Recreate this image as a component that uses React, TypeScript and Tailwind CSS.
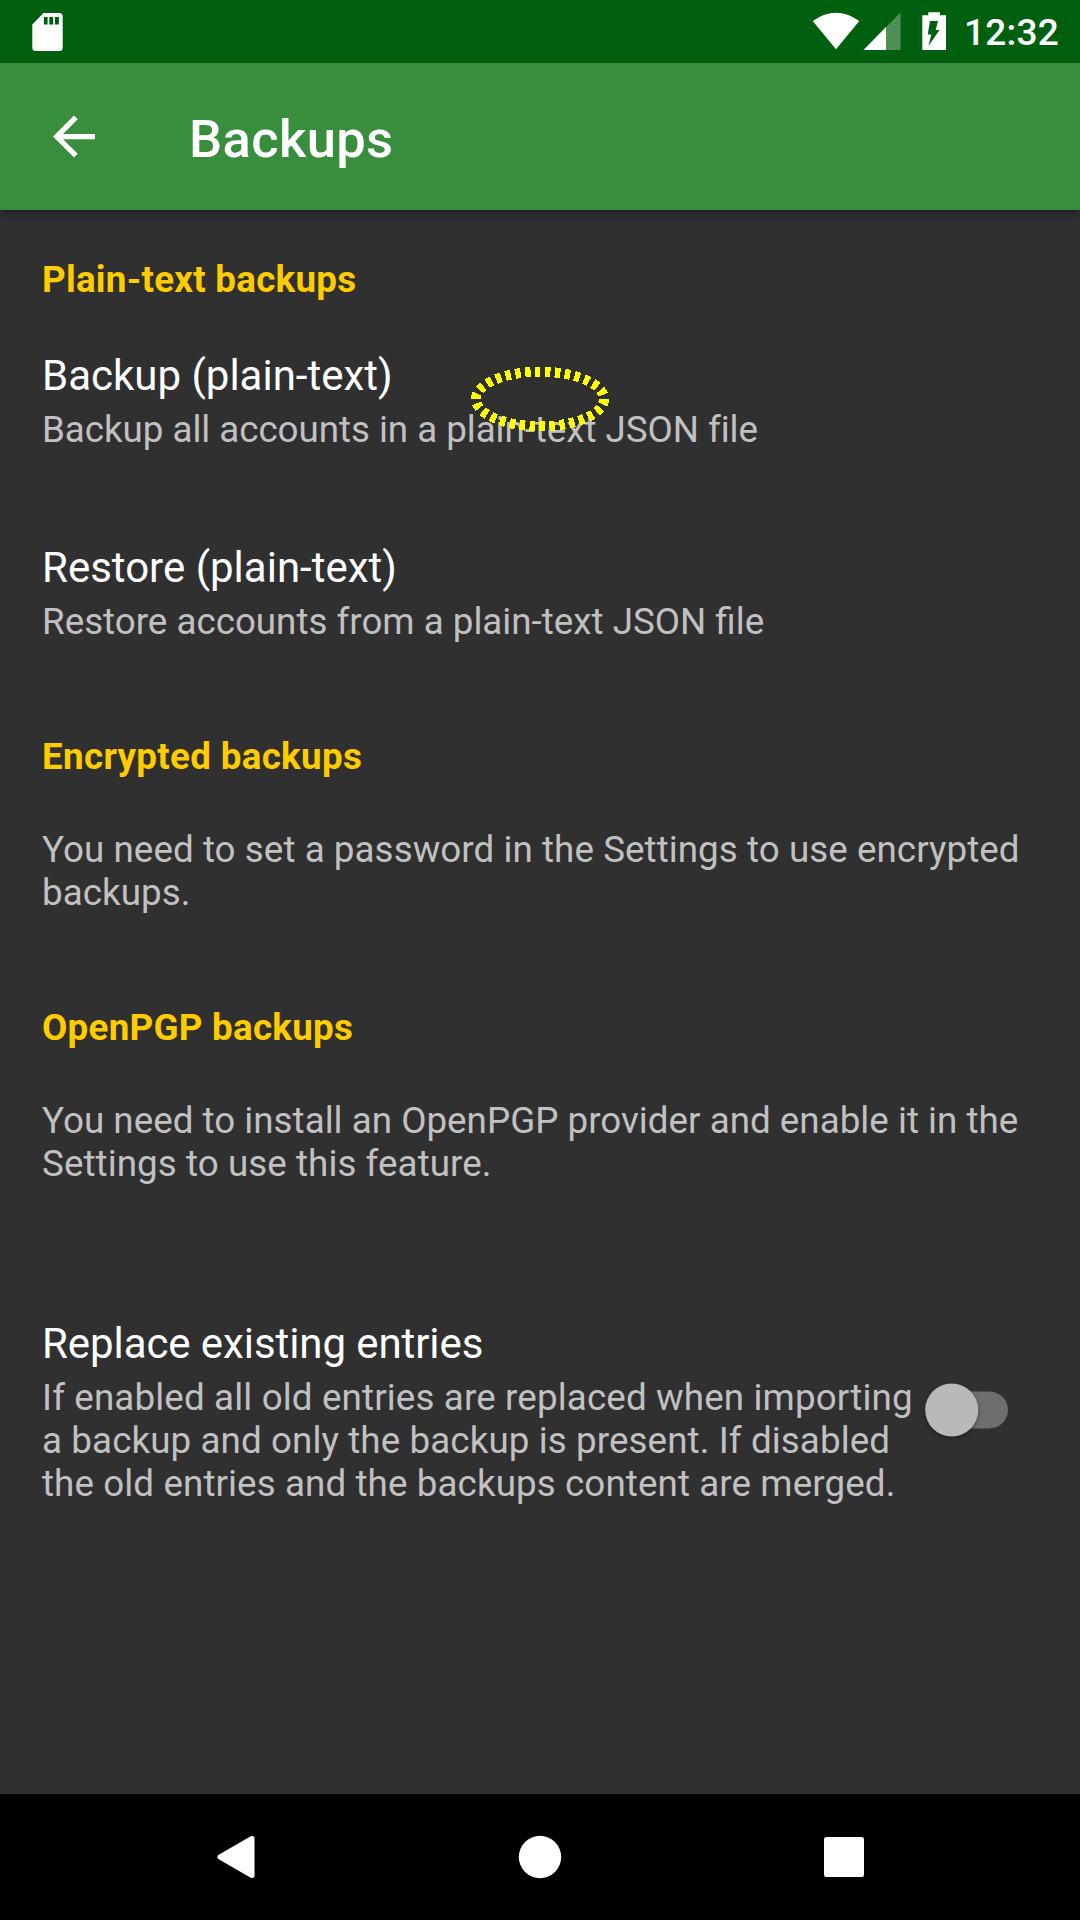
export default function App() {
  return (
    <div className="flex h-[1920px] w-[1080px] flex-col overflow-hidden bg-[#303030] font-['Roboto',sans-serif] text-white">
      <header className="flex h-[63px] shrink-0 items-center bg-[#00600f]">
        <svg className="ml-[32px]" width="31" height="38" viewBox="0 0 31 38">
          <path fill="#fff" fillRule="evenodd" d="M11.500 0H27.500Q30.700 0 30.700 3.500V34.500Q30.700 38 27.500 38H3.700Q.3 38 .3 34.500V11.500ZM11.900 4V11.500H15.600V4ZM17.300 4V11.500H21.200V4ZM23 4V11.500H26.900V4Z" />
        </svg>
        <svg className="ml-auto" width="140" height="63" viewBox="810 0 140 63">
          <path fill="#fff" d="M812.700 21Q836 4.500 859.300 21L836 49.300Z" />
          <path fill="#fff" opacity=".3" d="M900.500 12.500V50H863.500Z" />
          <path fill="#fff" d="M886 27V50H863.500Z" />
          <path fill="#fff" fillRule="evenodd" d="M928.300 12.300H940V15.200H946V50H922.300V15.200H928.300ZM930 21H938L935.700 30H939.500L928.500 46L931.300 34.500H927.700Z" />
        </svg>
        <span className="w-[109px] ml-[21px] pt-[3px] text-[37px] leading-[60px] font-medium tracking-[0.2px] -indent-[7px]">12:32</span>
      </header>
      <div className="z-10 flex h-[147px] shrink-0 items-center bg-[#388e3c] shadow-[0_3px_8px_rgba(0,0,0,0.35)]">
        <svg className="ml-[42px]" width="63" height="63" viewBox="-0.19 0 24 24">
          <path fill="#fff" d="M20 11H7.830l5.590-5.590L12 4l-8 8 8 8 1.410-1.410L7.830 13H20v-2z" />
        </svg>
        <h1 className="ml-[84px] pt-[5px] text-[52.500px] font-medium tracking-[0.35px]">Backups</h1>
      </div>
      <main className="relative flex grow flex-col px-[42px] whitespace-nowrap">
        <h2 className="mt-[48px] text-[36.750px] leading-[43px] font-bold tracking-[0.26px] text-[#fc0]">Plain-text backups</h2>
        <h3 className="mt-[50px] text-[42px] leading-[49px]">Backup (plain-text)</h3>
        <p className="mt-[8px] text-[36.750px] leading-[43px] tracking-[-0.045px] text-[#c1c1c1]">Backup all accounts in a plain-text JSON file</p>
        <h3 className="mt-[92px] text-[42px] leading-[49px]">Restore (plain-text)</h3>
        <p className="mt-[8px] text-[36.750px] leading-[43px] text-[#c1c1c1]">Restore accounts from a plain-text JSON file</p>
        <h2 className="mt-[92px] text-[36.750px] leading-[43px] font-bold tracking-[0.32px] text-[#fc0]">Encrypted backups</h2>
        <p className="mt-[50px] text-[36.750px] leading-[43px] tracking-[0.060px] text-[#c1c1c1]">You need to set a password in the Settings to use encrypted<br />backups.</p>
        <h2 className="mt-[92px] text-[36.750px] leading-[43px] font-bold tracking-[0.26px] text-[#fc0]">OpenPGP backups</h2>
        <p className="mt-[50px] text-[36.750px] leading-[43px] tracking-[0.020px] text-[#c1c1c1]">You need to install an OpenPGP provider and enable it in the<br /><span className="tracking-[0.070px]">Settings to use this feature.</span></p>
        <div className="mt-[134px] flex items-center">
          <div className="w-[878px] shrink-0">
            <h3 className="text-[42px] leading-[49px] tracking-[-0.080px]">Replace existing entries</h3>
            <p className="mt-[8px] text-[36.750px] leading-[43px] tracking-[0.1px] text-[#c1c1c1]"><span className="tracking-[0.14px]">If enabled all old entries are replaced when importing</span><br />a backup and only the backup is present. If disabled<br />the old entries and the backups content are merged.</p>
          </div>
          <svg className="-mt-[5px]" width="92" height="66" viewBox="0 0 92 66">
            <rect x="10" y="14.500" width="78" height="37" rx="18.500" fill="#6e6e6e" />
            <circle cx="31.700" cy="33" r="26.500" fill="#b9b9b9" className="drop-shadow-[0_2px_2px_rgba(0,0,0,0.35)]" />
          </svg>
        </div>
        <svg className="absolute top-[156px] left-[470px]" width="140" height="66" viewBox="0 0 140 66">
          <ellipse cx="70" cy="33" rx="64" ry="27.300" fill="none" stroke="#ff0" strokeWidth="10" pathLength="300" strokeDasharray="5.5 4.5" shapeRendering="crispEdges" />
        </svg>
      </main>
      <nav className="flex h-[126px] shrink-0 items-center bg-black">
        <svg width="1080" height="126" viewBox="0 0 1080 126">
          <path fill="#fff" stroke="#fff" strokeWidth="5" strokeLinejoin="round" d="M220 63L252 44.500V81.500Z" />
          <circle cx="540" cy="63" r="21.200" fill="#fff" />
          <rect x="824" y="43" width="40" height="40" rx="2.500" fill="#fff" />
        </svg>
      </nav>
    </div>
  );
}
